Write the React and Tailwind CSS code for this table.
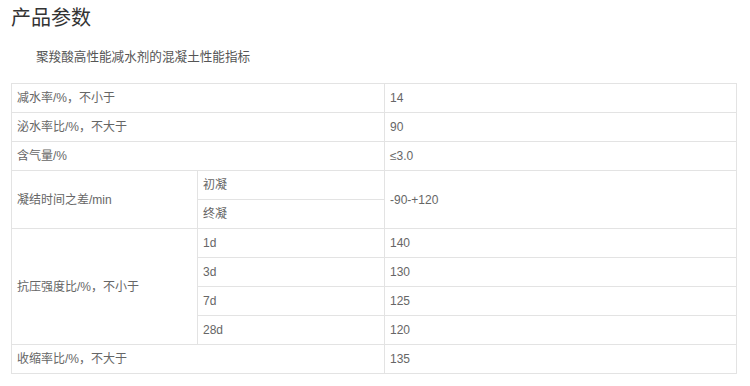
export default function App() {
  const font = { fontFamily: '"Liberation Sans", "Noto Sans CJK SC", sans-serif' };
  const td = "border border-[#e3e3e3] h-[29px] px-[5px] py-0 align-middle";

  return (
    <div className="bg-white min-h-[386px] px-[11px] text-[#666]" style={font}>
      <h2 className="pt-[6px] text-[20px] leading-[24px] text-[#333] font-normal">产品参数</h2>
      <p className="mt-[17px] pl-[25px] text-[12.6px] leading-[20px] text-[#555]">
        聚羧酸高性能减水剂的混凝土性能指标
      </p>
      <table className="mt-[16px] w-[726px] table-fixed border-collapse text-[12px] leading-[16px]">
        <colgroup>
          <col className="w-[186px]" />
          <col className="w-[187px]" />
          <col />
        </colgroup>
        <tbody>
          <tr>
            <td className={td} colSpan={2}>减水率/%，不小于</td>
            <td className={td}>14</td>
          </tr>
          <tr>
            <td className={td} colSpan={2}>泌水率比/%，不大于</td>
            <td className={td}>90</td>
          </tr>
          <tr>
            <td className={td} colSpan={2}>含气量/%</td>
            <td className={td}>≤3.0</td>
          </tr>
          <tr>
            <td className={td} rowSpan={2}>凝结时间之差/min</td>
            <td className={td}>初凝</td>
            <td className={td} rowSpan={2}>-90-+120</td>
          </tr>
          <tr>
            <td className={td}>终凝</td>
          </tr>
          <tr>
            <td className={td} rowSpan={4}>抗压强度比/%，不小于</td>
            <td className={td}>1d</td>
            <td className={td}>140</td>
          </tr>
          <tr>
            <td className={td}>3d</td>
            <td className={td}>130</td>
          </tr>
          <tr>
            <td className={td}>7d</td>
            <td className={td}>125</td>
          </tr>
          <tr>
            <td className={td}>28d</td>
            <td className={td}>120</td>
          </tr>
          <tr>
            <td className={td} colSpan={2}>收缩率比/%，不大于</td>
            <td className={td}>135</td>
          </tr>
        </tbody>
      </table>
    </div>
  );
}
